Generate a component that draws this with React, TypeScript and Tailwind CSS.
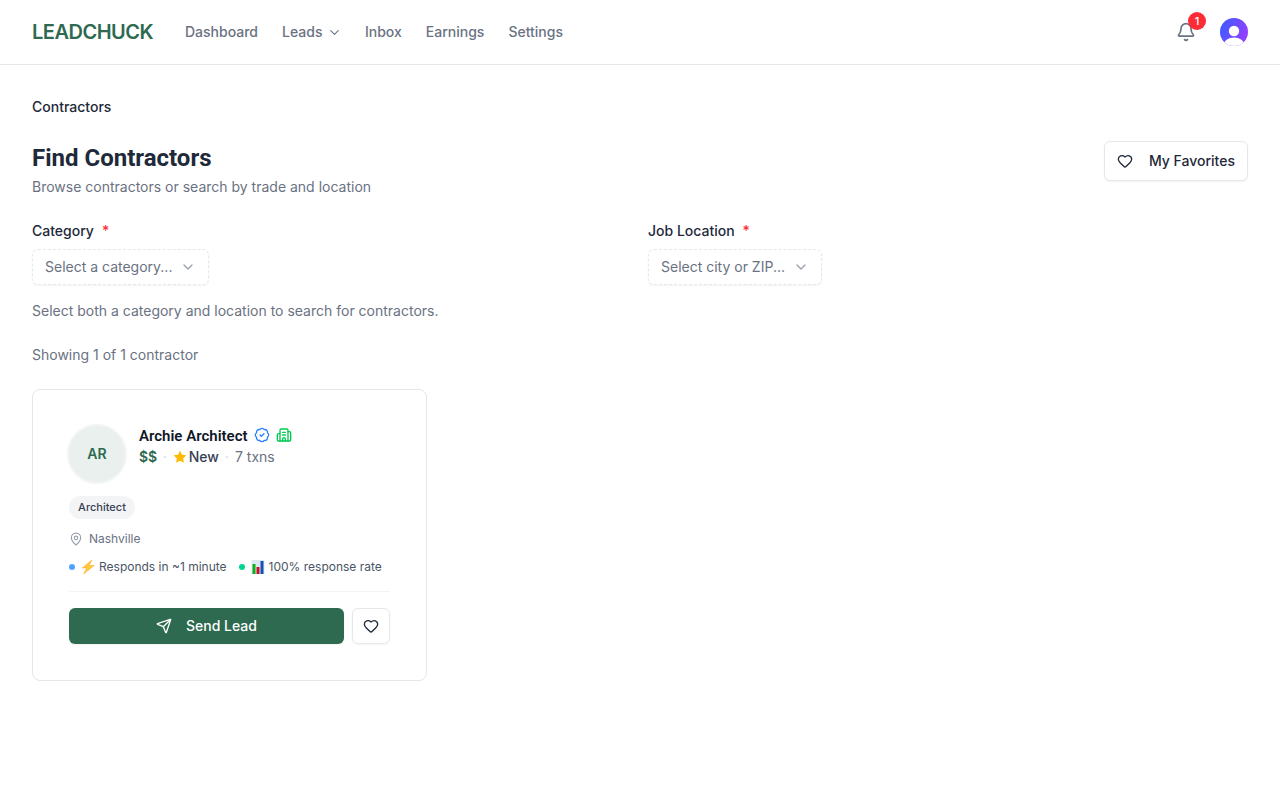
import React from "react";
import { BadgeCheck, Bell, Building2, ChevronDown, Heart, MapPin, Send } from "lucide-react";

function Header() {
  return (
    <header className="flex h-[65px] items-center justify-between border-b border-gray-200 px-8">
      <div className="flex items-center">
        <a className="w-[153px] text-xl font-semibold tracking-[-0.5px] text-[#2d6a4f]">LEADCHUCK</a>
        <nav className="flex items-center gap-6 text-sm font-medium text-gray-500">
          <a>Dashboard</a>
          <a className="flex items-center gap-[3.5px]">
            Leads
            <ChevronDown size={15} strokeWidth={1.75} className="-mr-px ml-px" />
          </a>
          <a>Inbox</a>
          <a>Earnings</a>
          <a>Settings</a>
        </nav>
      </div>
      <div className="flex items-center gap-6">
        <div className="relative text-gray-500">
          <Bell size={20} />
          <span className="absolute -top-2.5 -right-2.5 flex size-[18px] items-center justify-center rounded-full bg-[#fb2c36] text-[11px] font-medium text-white">
            1
          </span>
        </div>
        <Avatar />
      </div>
    </header>
  );
}

function Avatar() {
  return (
    <svg viewBox="0 0 28 28" className="size-7">
      <defs>
        <linearGradient id="avatarFill" x1="0" y1="0.3" x2="1" y2="0.7">
          <stop offset="0" stopColor="#3f5bff" />
          <stop offset="1" stopColor="#9b3dff" />
        </linearGradient>
        <clipPath id="avatarClip">
          <circle cx="14" cy="14" r="14" />
        </clipPath>
      </defs>
      <g clipPath="url(#avatarClip)">
        <rect width="28" height="28" fill="url(#avatarFill)" />
        <circle cx="14" cy="13" r="5.2" fill="#fff" />
        <ellipse cx="14" cy="27" rx="10.5" ry="7.5" fill="#fff" />
      </g>
    </svg>
  );
}

function BoltIcon() {
  return (
    <svg viewBox="0 0 14 16" className="mr-1 h-4 w-3.5">
      <path d="M10.8 1 1.2 8.9l4.6.1L2.6 15l10.6-8.4-4.9-.2z" fill="#ffc93c" stroke="#f6a52c" strokeWidth="0.5" />
    </svg>
  );
}

function ChartIcon() {
  return (
    <svg viewBox="0 0 14 16" className="mr-1 h-4 w-3.5">
      <rect x="0.5" y="1" width="13" height="14" fill="#dce8f0" />
      <rect x="1.5" y="5" width="3" height="10" fill="#0fae1d" />
      <rect x="5.5" y="8" width="3" height="7" fill="#c8102a" />
      <rect x="9.5" y="2" width="3" height="13" fill="#1450b4" />
    </svg>
  );
}

function Field({ label, placeholder, width }: { label: string; placeholder: string; width: string }) {
  return (
    <div>
      <div className="flex h-5 items-center gap-2 text-sm font-medium text-gray-800">
        {label}
        <span className="text-[#fb2c36]">*</span>
      </div>
      <button
        className={`mt-2 flex h-9 items-center justify-between rounded-md border border-dashed border-gray-200 px-3 text-sm text-gray-500 shadow-xs ${width}`}
      >
        {placeholder}
        <ChevronDown size={16} className="text-gray-400" />
      </button>
    </div>
  );
}

function ContractorCard() {
  return (
    <article className="mt-6 h-[292px] w-[395px] rounded-lg border border-gray-200 px-9 pt-[34px]">
      <div className="flex gap-3">
        <div className="-ml-0.5 flex size-[60px] items-center justify-center rounded-full border-2 border-gray-100 bg-[#eaf0ed] text-sm font-semibold text-[#2d6a4f]">
          AR
        </div>
        <div className="pt-px">
          <div className="flex h-[22px] items-center">
            <h2 className="w-[115px] font-[Roboto] text-[15px] font-semibold whitespace-nowrap text-gray-900">
              Archie Architect
            </h2>
            <BadgeCheck size={16} className="mb-0.5 text-[#2b7fff]" />
            <Building2 size={16} className="mb-0.5 ml-1.5 text-[#00c950]" />
          </div>
          <div className="flex h-5 items-center text-sm">
            <span className="font-semibold text-[#2d6a4f]">$$</span>
            <span className="mr-1.5 pl-[5.5px] text-gray-300">·</span>
            <svg viewBox="0 0 24 24" className="size-3.5 fill-[#ffb900]">
              <path d="m12 1.2 3.3 6.8 7.6 1.1-5.5 5.3 1.3 7.5-6.7-3.5-6.7 3.5 1.3-7.5-5.5-5.3 7.6-1.1z" />
            </svg>
            <span className="ml-0.5 font-medium text-gray-700">New</span>
            <span className="mx-1.5 text-gray-300">·</span>
            <span className="text-gray-500">7 txns</span>
          </div>
        </div>
      </div>
      <div className="mt-3 flex h-[23px] w-[66px] items-center justify-center rounded-full bg-gray-100 text-[11px] font-medium text-gray-700">
        Architect
      </div>
      <div className="mt-3 flex h-4 items-center gap-1.5 text-xs text-gray-500">
        <MapPin size={14} className="text-gray-400" />
        Nashville
      </div>
      <div className="mt-3 flex h-4 items-center text-xs whitespace-nowrap text-gray-600">
        <span className="mr-1.5 size-1.5 rounded-full bg-[#51a2ff]" />
        <BoltIcon />
        <span>Responds in ~1 minute</span>
        <span className="mr-1.5 ml-3 size-1.5 rounded-full bg-[#00d492]" />
        <ChartIcon />
        <span>100% response rate</span>
      </div>
      <div className="mt-4 flex gap-2 border-t border-gray-100 pt-4">
        <button className="flex h-9 flex-1 items-center justify-center gap-3.5 rounded-md bg-[#2d6a4f] text-sm font-medium text-white shadow-xs">
          <Send size={16} />
          Send Lead
        </button>
        <button className="flex h-9 w-[38px] items-center justify-center rounded-md border border-gray-200 text-gray-800 shadow-xs">
          <Heart size={16} />
        </button>
      </div>
    </article>
  );
}

export default function App() {
  return (
    <div className="min-h-screen bg-white font-[Inter,sans-serif]">
      <Header />
      <main className="px-8 pt-8">
        <div className="h-5 text-sm font-medium text-gray-800">Contractors</div>
        <div className="mt-6 flex items-start justify-between">
          <div>
            <h1 className="h-8 font-[Roboto] text-2xl leading-[34px] font-bold text-gray-800">Find Contractors</h1>
            <p className="mt-1 text-sm text-gray-500">Browse contractors or search by trade and location</p>
          </div>
          <button className="flex h-10 w-36 items-center justify-between rounded-md border border-gray-200 px-3 text-sm font-medium text-gray-800 shadow-xs">
            <Heart size={16} />
            My Favorites
          </button>
        </div>
        <div className="mt-6 grid grid-cols-2 gap-4">
          <Field label="Category" placeholder="Select a category..." width="w-[177px]" />
          <Field label="Job Location" placeholder="Select city or ZIP..." width="w-[174px]" />
        </div>
        <p className="mt-4 text-sm text-gray-500">
          Select both a category and location to search for contractors.
        </p>
        <p className="mt-6 text-sm text-gray-500">Showing 1 of 1 contractor</p>
        <ContractorCard />
      </main>
    </div>
  );
}
